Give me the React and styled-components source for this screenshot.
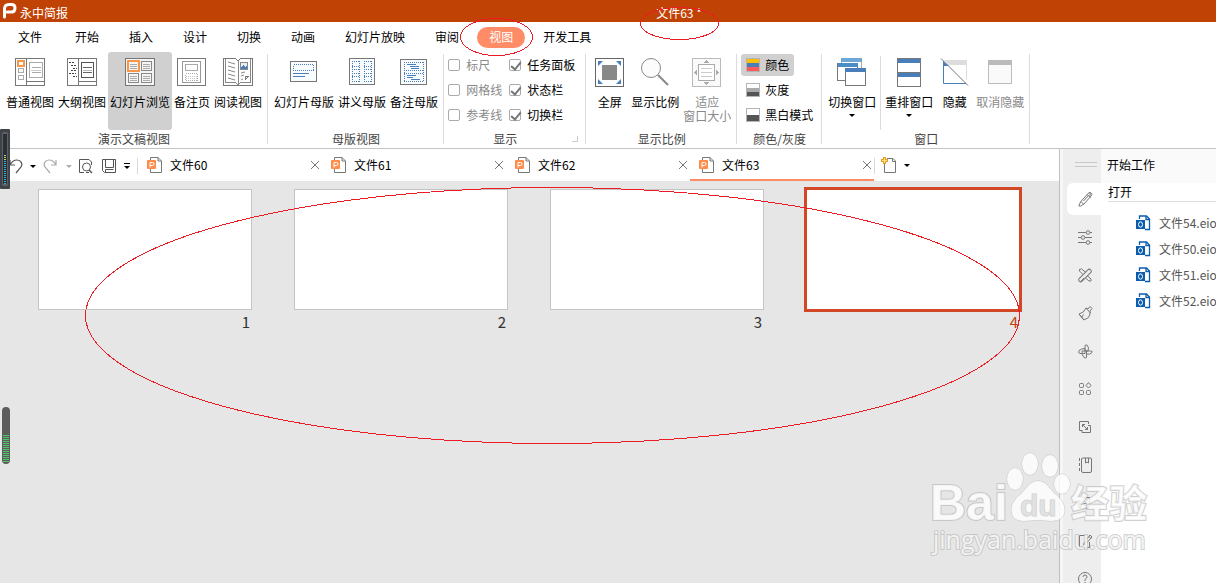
import React from "react";
import styled, { createGlobalStyle, css } from "styled-components";

const GlobalStyle = createGlobalStyle`
  * { box-sizing: border-box; }
  body { margin: 0; }
  body, button, input {
    font-family: "Noto Sans CJK SC", "Liberation Sans", sans-serif;
    font-size: 12px;
    line-height: 14px;
    color: #000;
  }
  button { border: 0; background: none; padding: 0; margin: 0; white-space: nowrap; cursor: pointer; }
  svg { display: block; flex: none; }
`;

const Window = styled.div`
  position: relative;
  height: 100vh;
  display: flex;
  flex-direction: column;
  overflow: hidden;
  background: #fff;
`;

/* ---------- title bar and menu ---------- */
const TitleBar = styled.header`
  display: grid;
  grid-template-columns: 1fr auto 1fr;
  align-items: center;
  height: 22px;
  flex: none;
  padding: 0 72px 0 2px;
  background: #c04205;
  color: #fff;
`;
const Brand = styled.div`
  display: flex;
  align-items: center;
  gap: 3px;
`;
const DocTitle = styled.h1`
  margin: 0 0 0 212px;
  font-size: 12px;
  font-weight: 400;
  line-height: 14px;
  padding-top: 4px;
`;
const AppName = styled.span`
  padding-top: 4px;
`;
const Menu = styled.nav`
  display: flex;
  align-items: center;
  height: 30px;
  flex: none;
`;
const MenuItem = styled.button`
  height: 21px;
  padding: 0 ${(p) => (p.$wide ? 18 : 15)}px;
`;
const ActiveMenuItem = styled(MenuItem)`
  margin: 0 3px;
  padding: 0 12px;
  border-radius: 11px;
  background: #ff8c66;
  color: #fff;
`;

/* ---------- ribbon ---------- */
const Ribbon = styled.div`
  display: flex;
  height: 97px;
  flex: none;
  border-bottom: 1px solid #c4c4c4;
`;
const Group = styled.section`
  position: relative;
  display: flex;
  flex-direction: column;
  padding: 0 ${(p) => (p.$options ? 8 : 4)}px 0 4px;
  &::after {
    content: "";
    position: absolute;
    right: 0;
    top: 2px;
    bottom: 4px;
    width: 1px;
    background: #dcdcdc;
  }
`;
const Tools = styled.div`
  display: flex;
  height: 78px;
`;
const GroupFooter = styled.div`
  display: flex;
  align-items: center;
  justify-content: center;
  gap: 10px;
  height: 14px;
  margin-top: 2px;
  color: #444;
`;
const GroupName = styled.h2`
  margin: 0;
  flex: 1;
  text-align: center;
  font-size: 12px;
  font-weight: 400;
  line-height: 14px;
`;
const Launcher = styled.button`
  width: 6px;
  height: 6px;
  border: solid #ccc;
  border-width: 0 1px 1px 0;
`;
const BigButton = styled.button`
  display: flex;
  flex-direction: column;
  align-items: center;
  min-width: 39px;
  height: 78px;
  padding: 6px 2px 0;
  gap: 7px;
  border-radius: 3px;
  ${(p) => p.$active && css`background: #d0d0d0;`}
  &:disabled { color: #8a8a8a; }
`;
const BigLabel = styled.span`
  display: flex;
  flex-direction: column;
  align-items: center;
`;
const Caret = styled.span`
  width: 0;
  height: 0;
  border: 3px solid transparent;
  border-top-color: ${(p) => (p.$muted ? "#a9b0b5" : "#000")};
  border-bottom-width: 0;
  ${(p) => p.$below && css`margin-top: 5px;`}
`;
const Divider = styled.span`
  width: 1px;
  margin: 4px 2px 0;
  background: #dcdcdc;
`;
const Stack = styled.div`
  display: flex;
  flex-direction: column;
  align-items: flex-start;
  gap: 3px;
  padding-top: 2px;
`;
const SmallButton = styled.button`
  display: flex;
  align-items: center;
  gap: 5px;
  height: 22px;
  padding: 0 5px;
  border-radius: 3px;
  ${(p) => p.$active && css`background: #d0d0d0;`}
`;
const CheckGrid = styled.div`
  display: grid;
  grid-template-columns: auto auto;
  grid-auto-rows: 22px;
  gap: 3px 7px;
  padding: 2px 3px 0 0;
`;
const CheckLabel = styled.label`
  display: flex;
  align-items: center;
  gap: 6px;
  color: ${(p) => (p.$muted ? "#8a8a8a" : "#000")};
`;
const CheckBox = styled.input`
  appearance: none;
  position: relative;
  width: 12px;
  height: 12px;
  margin: 0;
  border: 1px solid #aaa;
  border-radius: 2px;
  background: #fff;
  &:checked::after {
    content: "";
    position: absolute;
    left: 3px;
    top: 0;
    width: 4px;
    height: 8px;
    border: solid #777;
    border-width: 0 2px 2px 0;
    transform: rotate(40deg);
  }
`;

/* ---------- workspace ---------- */
const Body = styled.div`
  display: flex;
  flex: 1;
  min-height: 0;
`;
const Workspace = styled.main`
  display: flex;
  flex-direction: column;
  flex: 1;
  min-width: 0;
  border-right: 1px solid #c0c0c0;
  background: #e6e6e6;
`;
const TabBar = styled.div`
  display: flex;
  height: 32px;
  flex: none;
  background: #fff;
`;
const QuickBar = styled.div`
  display: flex;
  align-items: center;
  gap: 6px;
  padding: 2px 6px 0 7px;
`;
const QuickButton = styled.button`
  display: flex;
  align-items: center;
  justify-content: center;
  width: ${(p) => (p.$narrow ? 8 : 16)}px;
  height: 18px;
`;
const Tab = styled.div`
  display: flex;
  align-items: center;
  width: 184px;
  padding: 2px 2px 0 9px;
  border-bottom: 2px solid ${(p) => (p.$active ? "#ff8c66" : "transparent")};
`;
const TabName = styled.button`
  display: flex;
  align-items: center;
  gap: 8px;
  flex: 1;
`;
const CloseButton = styled.button`
  padding: 0;
`;
const BarLine = styled.span`
  width: 1px;
  height: 16px;
  margin-top: 9px;
  background: #d9d9d9;
`;
const NewTab = styled.div`
  display: flex;
  align-items: center;
  gap: 6px;
  padding-left: 6px;
`;
const Sorter = styled.div`
  display: flex;
  flex-wrap: wrap;
  gap: 20px 42px;
  padding: 8px 37px 0 38px;
`;
const SlideItem = styled.figure`
  margin: 0;
  width: 214px;
`;
const Thumb = styled.div`
  height: 121px;
  background: #fff;
  border: 1px solid ${(p) => (p.$selected ? "#d24726" : "#c4c4c4")};
  ${(p) => p.$selected && css`box-shadow: 0 0 0 2px #d24726;`}
`;
const SlideNumber = styled.figcaption`
  padding: 2px 2px 0 0;
  text-align: right;
  font-size: 15px;
  line-height: 20px;
  color: ${(p) => (p.$selected ? "#c04205" : "#333")};
`;

/* ---------- task pane ---------- */
const Rail = styled.aside`
  width: 41px;
  flex: none;
  display: flex;
  flex-direction: column;
  align-items: flex-end;
  border-left: 3px solid #f6f6f6;
  background: #eee;
`;
const Grip = styled.div`
  width: 22px;
  height: 5px;
  flex: none;
  margin: 13px 4px 16px 0;
  border: solid #c8c8c8;
  border-width: 1px 0;
`;
const RailButton = styled.button`
  display: flex;
  align-items: center;
  width: 34px;
  height: 32px;
  margin-bottom: 6px;
  padding-left: 11px;
  flex: none;
  border-radius: 6px 0 0 6px;
  background: ${(p) => (p.$active ? "#fff" : "transparent")};
`;
const Pane = styled.section`
  width: 115px;
  flex: none;
  overflow: hidden;
`;
const PaneTitle = styled.h2`
  margin: 0;
  height: 34px;
  padding: 9px 0 0 6px;
  background: #fafafa;
  font-size: 12px;
  font-weight: 400;
  line-height: 14px;
`;
const PaneSection = styled.h3`
  margin: 0 0 0 7px;
  padding: 2px 0;
  border-bottom: 1px solid #ddd;
  font-size: 12px;
  font-weight: 400;
  line-height: 14px;
`;
const FileList = styled.ul`
  margin: 0;
  padding: 8px 0 0 35px;
  list-style: none;
`;
const FileLink = styled.a`
  display: flex;
  align-items: center;
  gap: 8px;
  height: 26px;
  color: #555;
  text-decoration: none;
  white-space: nowrap;
`;

/* ---------- floating layers ---------- */
const Floating = styled.div`
  position: absolute;
  left: ${(p) => p.$left}px;
  top: ${(p) => p.$top}px;
  pointer-events: none;
`;

/* ---------- drawings ---------- */
const Big = ({ children }) => (
  <svg width="30" height="30" viewBox="0 0 30 30" fill="none" stroke="#777" shapeRendering="crispEdges">{children}</svg>
);
const lines = (x1, x2, ys, stroke = "#aaa") =>
  ys.map((y) => <path key={`${x1}-${y}`} d={`M${x1} ${y}.5H${x2}`} stroke={stroke} />);

const NormalIcon = () => (
  <Big>
    <rect x=".5" y=".5" width="29" height="27" fill="#fff" />
    <path d="M11.5 0V28M11 23.5H30" />
    <rect x="3" y="3" width="6" height="5" stroke="#f79646" strokeWidth="2" />
    <rect x="3.500" y="10.500" width="5" height="4" stroke="#aaa" />
    <rect x="3.500" y="17.500" width="5" height="4" stroke="#aaa" />
    <rect x="14.500" y="4.500" width="13" height="15" stroke="#aaa" />
    {lines(17, 26, [9, 14])}{lines(16, 26, [12], "#ccc")}
  </Big>
);
const OutlineIcon = () => (
  <Big>
    <rect x=".5" y=".5" width="29" height="27" fill="#fff" />
    <path d="M11.5 0V28M11 23.5H30" />
    <path d="M2 4.500H8M4 7.500H9M6 10.500H10M4 12.500H9M2 15.500H9M6 18.500H10" stroke="#444" strokeDasharray="2 1" />
    <rect x="14.500" y="4.500" width="12" height="15" stroke="#555" />
    {lines(16, 25, [9, 14], "#666")}{lines(16, 25, [12], "#bbb")}
  </Big>
);
const SorterIcon = () => (
  <Big>
    <rect x=".5" y=".5" width="29" height="27" fill="#f4f4f4" />
    {[[16, 3], [3, 15], [16, 15]].map(([x, y]) => (
      <rect key={`${x}-${y}`} x={x + 0.5} y={y + 0.5} width="10" height="9" stroke="#888" />
    ))}
    <rect x="3" y="3" width="11" height="10" stroke="#f79646" strokeWidth="2" />
    {lines(5, 12, [6, 8, 10, 18, 20, 22])}{lines(18, 25, [6, 8, 10, 18, 20, 22])}
  </Big>
);
const NotesIcon = () => (
  <Big>
    <rect x=".5" y=".5" width="28" height="27" fill="#fff" />
    <rect x="5.500" y="3.500" width="18" height="21" stroke="#999" />
    <rect x="8.500" y="6.500" width="12" height="6" stroke="#aaa" />
    <rect x="8.500" y="15.500" width="12" height="7" stroke="#aaa" strokeDasharray="1 1" />
    <path d="M9 18.500H20M9 20.500H20" stroke="#ccc" strokeDasharray="1 1" />
  </Big>
);
const ReadingIcon = () => (
  <Big>
    <path d="M0 .5H12L15 2.500L18 .5H30M.5 0V27.500H29.500V0" />
    <path d="M2.500 1V24.500H12L15 26.500L18 24.500H27.500V1M15.500 3V27" stroke="#888" />
    <path d="M5 4L12 6M5 8L12 10M5 12L12 14M5 16L12 18M5 20L12 22M18 15L22 14M18 18L21 17M18 22L20 21" stroke="#888" shapeRendering="auto" />
    <rect x="17.500" y="4.500" width="7" height="7" stroke="#888" fill="#e8eef5" />
    <path d="M18 11V9L20 7L22 9L24 8V11Z" fill="#4a7ebb" stroke="none" />
    <path d="M22 22L26 18H22Z" fill="#fff" />
  </Big>
);
const SlideMasterIcon = () => (
  <Big>
    <rect x="1.500" y="3.500" width="26" height="20" fill="#f9fcfe" />
    <rect x="4.500" y="6.500" width="20" height="6" stroke="#4a7ebb" strokeDasharray="1 1" />
    {lines(4, 20, [15], "#4a7ebb")}{lines(4, 16, [18], "#4a7ebb")}
  </Big>
);
const HandoutIcon = () => (
  <Big>
    <rect x="2.500" y=".5" width="25" height="26" fill="#f9fcfe" />
    <path d="M5 3.500H13M17 3.500H25M5 8.500H13M17 8.500H25M5 11.500H13M17 11.500H25M5 15.500H13M17 15.500H25M5 18.500H13M17 18.500H25M5 23.500H13M17 23.500H25M5.500 3V24M12.500 3V24M17.500 3V24M24.500 3V24" stroke="#4a7ebb" strokeDasharray="1 1" />
  </Big>
);
const NotesMasterIcon = () => (
  <Big>
    <rect x="1.500" y="1.500" width="26" height="25" fill="#f9fcfe" />
    <path d="M5 4.500H25M5 12.500H25M5 15.500H25M5 23.500H25M5.500 4V24M24.500 4V24" stroke="#4a7ebb" strokeDasharray="1 1" />
    <path d="M8 6.500H17M11 8.500H20M12 10.500H20M8 17.500H17M8 19.500H14M12 21.500H21" stroke="#4a7ebb" />
  </Big>
);
const FullScreenIcon = () => (
  <Big>
    <rect x=".5" y=".5" width="28" height="28" fill="#fff" stroke="#666" />
    <rect x="7" y="7" width="15" height="15" fill="#888" stroke="none" />
    <path d="M3 3H8L3 8ZM26 3H21L26 8ZM3 26H8L3 21ZM26 26H21L26 21Z" fill="#4a7ebb" stroke="none" shapeRendering="auto" />
  </Big>
);
const ZoomIcon = () => (
  <svg width="30" height="30" viewBox="0 0 30 30" fill="none" stroke="#888">
    <circle cx="11" cy="10" r="9.500" fill="#fcfcfc" />
    <path d="M18 17L28 27" strokeWidth="2" />
  </svg>
);
const FitIcon = () => (
  <Big>
    <rect x=".5" y=".5" width="28" height="28" fill="#fafafa" stroke="#bbb" />
    <rect x="6.500" y="6.500" width="16" height="16" stroke="#aaa" fill="#fff" />
    {lines(9, 20, [10, 14, 18], "#ccc")}
    <path d="M12 5L14.500 2L17 5ZM12 24L14.500 27L17 24ZM5 12L2 14.500L5 17ZM24 12L27 14.500L24 17Z" fill="#aaa" stroke="none" />
  </Big>
);
const SwitchWindowIcon = () => (
  <Big>
    <rect x="4.500" y=".5" width="20" height="14" fill="#fff" stroke="#aaa" />
    <path d="M4 0H25V4H4Z" fill="#6fa6d8" stroke="none" />
    <rect x=".5" y="5.500" width="20" height="17" fill="#fff" />
    <path d="M1 5H21V9H1Z" fill="#4a8ec5" stroke="none" />
    <rect x="8.500" y="10.500" width="20" height="17" fill="#fff" />
    <path d="M8 10H29V14H8Z" fill="#4a7ebb" stroke="none" />
  </Big>
);
const ArrangeIcon = () => (
  <Big>
    <rect x="3.500" y=".5" width="23" height="28" fill="#fff" />
    <path d="M4 0H26V5H4ZM4 14H26V19H4Z" fill="#4a7ebb" stroke="none" />
    <path d="M3 .5H27M3 14.500H27" />
  </Big>
);
const HideIcon = () => (
  <svg width="30" height="30" viewBox="0 0 30 30" fill="none">
    <path d="M4 2H27V7H9Z" fill="#ddd" />
    <path d="M26.500 5V22" stroke="#ddd" />
    <path d="M3.500 3V25.500H26" stroke="#4a7ebb" />
    <path d="M3 3L9 8H3Z" fill="#4a7ebb" />
    <path d="M1 .5L28 27.500" stroke="#777" />
  </svg>
);
const UnhideIcon = () => (
  <Big>
    <rect x="3.500" y="2.500" width="23" height="23" fill="#fafafa" stroke="#bbb" />
    <path d="M3 2H27V7H3Z" fill="#bbb" stroke="none" />
  </Big>
);
const Swatch = ({ colors }) => (
  <svg width="14" height="14" viewBox="0 0 14 14" shapeRendering="crispEdges">
    <rect x=".5" y=".5" width="13" height="13" fill="#fff" stroke="#b5b5b5" />
    {colors.map((c, i) => {
      const h = 12 / colors.length;
      return <rect key={i} x="1" y={1 + i * h} width="12" height={h} fill={c} />;
    })}
  </svg>
);
const Logo = () => (
  <svg width="15" height="18" viewBox="0 0 15 18" fill="none" stroke="#fff" strokeWidth="3">
    <path d="M2.500 15V7Q2.500 2.500 7 2.500H9.500Q13 2.500 13 6Q13 10 9.500 10H5" strokeLinecap="round" />
  </svg>
);
const Tiny = ({ children, stroke = "#555", w = 16 }) => (
  <svg width={w} height="16" viewBox={`0 0 ${w} 16`} fill="none" stroke={stroke}>{children}</svg>
);
const UndoIcon = () => <Tiny><path d="M3 2V7H8M3 7C5 3 7 2 10 2C14 2 16 6 14 9L9 15" strokeWidth="1.200" /></Tiny>;
const RedoIcon = () => <Tiny stroke="#aaa"><path d="M13 2V7H8M13 7C11 3 9 2 6 2C2 2 0 6 2 9L7 15" strokeWidth="1.200" /></Tiny>;
const PreviewIcon = () => (
  <Tiny><path d="M5 14.500H.5V1.500H10L12.500 4V7M10 14.500H7" /><circle cx="7.500" cy="9" r="4" /><path d="M10 12L13 15" strokeWidth="1.500" /></Tiny>
);
const SaveIcon = () => (
  <Tiny><path d="M1.500 1.500H14.500V14.500H3.500L1.500 12.500ZM4.500 1.500V9.500H12.500V1.500M4.500 14V11.500H12.500" /></Tiny>
);
const MoreIcon = () => (
  <svg width="8" height="8" viewBox="0 0 8 8"><path d="M1 1.500H7" stroke="#000" /><path d="M1 4H7L4 7Z" /></svg>
);
const DocIcon = () => (
  <Tiny w={15} stroke="#777">
    <path d="M3.500 .5H11L14.500 4V15.500H3.500ZM11 .5V4H14" fill="#fff" />
    <rect x="0" y="3" width="9" height="9" rx="1" fill="#ff8c4a" stroke="none" />
    <path d="M3 10.500V5.500H5.500Q7 5.500 7 7T5.500 8.500H3" stroke="#fff" />
  </Tiny>
);
const NewIcon = () => (
  <Tiny stroke="#777">
    <path d="M6 1.500H12L14.500 4V15.500H3.500V7M11.500 1.500V4.500H14.500" />
    <path d="M3.500 0V7M0 3.500H7" stroke="#e8a020" strokeWidth="3" /><path d="M3.500 1V6M1 3.500H6" stroke="#ffe28a" />
  </Tiny>
);
const CloseIcon = () => (
  <svg width="10" height="10" viewBox="0 0 10 10" stroke="#777"><path d="M1 1L9 9M9 1L1 9" /></svg>
);
const FileIcon = () => (
  <Tiny w={15} stroke="#0b5cad">
    <path d="M3.500 4V1H10.500L13.500 4V14.500H9M10 1V4.500H13.500" strokeWidth="1.300" />
    <rect x="0" y="5" width="9" height="9" fill="#0b5cad" stroke="none" />
    <ellipse cx="4.500" cy="9.500" rx="2" ry="2.700" stroke="#fff" />
  </Tiny>
);

const railIcons = [
  ["设计", <path d="M.8 15L2.500 11L10 2.500Q11.500 .8 13 2T13.500 4.500L6 13L2.500 15ZM9 3.500L12.500 6.500M3 10.500L5.500 13M5.500 10L10.500 4.500M12 1V5" />],
  ["属性", <><path d="M0 3.500H8M12 3.500H14M0 8.500H3M7 8.500H14M0 13.500H8M12 13.500H14" /><circle cx="10" cy="3.500" r="1.800" /><circle cx="5" cy="8.500" r="1.800" /><circle cx="10" cy="13.500" r="1.800" /></>],
  ["工具", <><rect x="-1" y="6.500" width="16" height="4" rx="2" transform="rotate(-45 7 8.500)" /><path d="M5 7.500L1.500 4Q.5 1.500 3.500 2L8 5.500M6 11L2.500 14.500M9 8.500L13 12Q14 15 11 14L7.500 11" /></>],
  ["样式", <path d="M1 9Q6 8 8 3L10 4L12 1.500L14 3.500L12 6V9Q12 13 6 15ZM8 3L12.500 8M4 12L5.500 9.500M1 9L6 15" />],
  ["切换", <path d="M7 8V3Q7 1.500 9 2Q11.500 4.500 10 8H7ZM7 8V5.500Q3.500 5.500 1 7.500Q0 10.500 2 10.500H7V8ZM7 8H4Q3.500 12 6 14.500Q8 16 8.500 14V8M8 8H12.500Q15 8 14 9.500Q12 12 8.500 11" />],
  ["组件", <><rect x="1.500" y="2.500" width="4" height="4" rx="1" /><rect x="1.500" y="9.500" width="4" height="4" rx="1" /><rect x="8.500" y="9.500" width="4" height="4" rx="1" /><path d="M10.500 1.500L13 4.500L10.500 7L8 4.500Z" /></>],
  ["缩放", <path d="M4 11.500H1.500V2.500H10.500V5M10 6.500H12.500V13.500H4V11M4.500 5.500L9.500 10.500M4.500 8V5.500H7M9.500 8V10.500H7" />],
  ["书签", <><path d="M3.500 2Q3.500 1 5 1H12Q13.500 1 13.500 2V14Q13.500 15.500 12 15.500H5Q3.500 15.500 3.500 14ZM7.500 1V6L9 5L10.500 6V1" /><path d="M1.500 1V16" strokeDasharray="3 2" /></>],
  ["大纲", <path d="M4 2.500H12L10.500 13.500H2.500L3 8M6 5.500H10M5.500 8.500H9M1 5V13H3" />],
  ["编辑", <path d="M8 2.500H1.500V14.500H11.500V9M6 10L5.500 11.500L7.500 11L14 4L12 2ZM11 3.500L13 5.500" />],
  ["帮助", <><circle cx="7" cy="8" r="6.500" /><path d="M5 6Q5 4 7 4T9 6Q9 7 7 8.500V10M7 11V12.500" /></>],
];

const docs = ["文件60", "文件61", "文件62", "文件63"];
const files = ["文件54.eio", "文件50.eio", "文件51.eio", "文件52.eio"];

const Tool = ({ icon, label, second, caret, ...rest }) => (
  <BigButton {...rest}>
    {icon}
    <BigLabel>
      <span>{label}</span>
      {second && <span>{second}</span>}
      {caret && <Caret $below />}
    </BigLabel>
  </BigButton>
);
const RibbonGroup = ({ name, options, children }) => (
  <Group $options={options}>
    <Tools>{children}</Tools>
    <GroupFooter>
      <GroupName>{name}</GroupName>
      {options && <Launcher aria-label="更多选项" />}
    </GroupFooter>
  </Group>
);
const Check = ({ label, on }) => (
  <CheckLabel $muted={!on}>
    <CheckBox type="checkbox" defaultChecked={on} />
    {label}
  </CheckLabel>
);

export default function App() {
  return (
    <Window>
      <GlobalStyle />
      <TitleBar>
        <Brand><Logo /><AppName>永中简报</AppName></Brand>
        <DocTitle>文件63 *</DocTitle>
      </TitleBar>
      <Menu>
        <MenuItem $wide>文件</MenuItem>
        {["开始", "插入", "设计", "切换", "动画", "幻灯片放映", "审阅"].map((m) => (
          <MenuItem key={m}>{m}</MenuItem>
        ))}
        <ActiveMenuItem>视图</ActiveMenuItem>
        <MenuItem>开发工具</MenuItem>
      </Menu>
      <Ribbon>
        <RibbonGroup name="演示文稿视图">
          <Tool icon={<NormalIcon />} label="普通视图" />
          <Tool icon={<OutlineIcon />} label="大纲视图" />
          <Tool icon={<SorterIcon />} label="幻灯片浏览" $active />
          <Tool icon={<NotesIcon />} label="备注页" />
          <Tool icon={<ReadingIcon />} label="阅读视图" />
        </RibbonGroup>
        <RibbonGroup name="母版视图">
          <Tool icon={<SlideMasterIcon />} label="幻灯片母版" />
          <Tool icon={<HandoutIcon />} label="讲义母版" />
          <Tool icon={<NotesMasterIcon />} label="备注母版" />
        </RibbonGroup>
        <RibbonGroup name="显示" options>
          <CheckGrid>
            <Check label="标尺" /><Check label="任务面板" on />
            <Check label="网格线" /><Check label="状态栏" on />
            <Check label="参考线" /><Check label="切换栏" on />
          </CheckGrid>
        </RibbonGroup>
        <RibbonGroup name="显示比例">
          <Tool icon={<FullScreenIcon />} label="全屏" />
          <Tool icon={<ZoomIcon />} label="显示比例" />
          <Tool icon={<FitIcon />} label="适应" second="窗口大小" disabled />
        </RibbonGroup>
        <RibbonGroup name="颜色/灰度">
          <Stack>
            <SmallButton $active><Swatch colors={["#ffc000", "#4a7ebb", "#ff5a5a"]} />颜色</SmallButton>
            <SmallButton><Swatch colors={["#fff", "#aaa", "#555"]} />灰度</SmallButton>
            <SmallButton><Swatch colors={["#fff", "#555"]} />黑白模式</SmallButton>
          </Stack>
        </RibbonGroup>
        <RibbonGroup name="窗口">
          <Tool icon={<SwitchWindowIcon />} label="切换窗口" caret />
          <Divider />
          <Tool icon={<ArrangeIcon />} label="重排窗口" caret />
          <Tool icon={<HideIcon />} label="隐藏" />
          <Tool icon={<UnhideIcon />} label="取消隐藏" disabled />
        </RibbonGroup>
      </Ribbon>
      <Body>
        <Workspace>
          <TabBar>
            <QuickBar>
              <QuickButton aria-label="撤销"><UndoIcon /></QuickButton>
              <QuickButton aria-label="撤销列表" $narrow><Caret /></QuickButton>
              <QuickButton aria-label="恢复"><RedoIcon /></QuickButton>
              <QuickButton aria-label="恢复列表" $narrow><Caret $muted /></QuickButton>
              <QuickButton aria-label="打印预览"><PreviewIcon /></QuickButton>
              <QuickButton aria-label="保存"><SaveIcon /></QuickButton>
              <QuickButton aria-label="更多" $narrow><MoreIcon /></QuickButton>
            </QuickBar>
            <BarLine />
            {docs.map((d) => (
              <Tab key={d} $active={d === "文件63"}>
                <TabName><DocIcon />{d}</TabName>
                <CloseButton aria-label={`关闭${d}`}><CloseIcon /></CloseButton>
              </Tab>
            ))}
            <BarLine />
            <NewTab>
              <QuickButton aria-label="新建"><NewIcon /></QuickButton>
              <QuickButton aria-label="新建列表" $narrow><Caret /></QuickButton>
            </NewTab>
          </TabBar>
          <Sorter>
            {[1, 2, 3, 4].map((n) => (
              <SlideItem key={n}>
                <Thumb $selected={n === 4} />
                <SlideNumber $selected={n === 4}>{n}</SlideNumber>
              </SlideItem>
            ))}
          </Sorter>
        </Workspace>
        <Rail>
          <Grip />
          {railIcons.map(([name, shape], i) => (
            <RailButton key={name} aria-label={name} $active={i === 0}>
              <Tiny stroke="#777">{shape}</Tiny>
            </RailButton>
          ))}
        </Rail>
        <Pane>
          <PaneTitle>开始工作</PaneTitle>
          <PaneSection>打开</PaneSection>
          <FileList>
            {files.map((f) => (
              <li key={f}><FileLink href="#"><FileIcon />{f}</FileLink></li>
            ))}
          </FileList>
        </Pane>
      </Body>

      <Floating $left={0} $top={129}>
        <svg width="10" height="60" viewBox="0 0 10 60">
          <rect width="10" height="60" rx="1" fill="#3f4348" />
          <rect x="2" y="3" width="6" height="54" rx="2" fill="#5c626a" />
          <rect x="3" y="5" width="4" height="50" fill="#2b2f34" />
          <path d="M5 26V32" stroke="#b6d66a" strokeWidth="2" strokeDasharray="1 1" />
          <path d="M5 32V55" stroke="#3ea9dc" strokeWidth="2" strokeDasharray="1 1" />
        </svg>
      </Floating>
      <Floating $left={2} $top={407}>
        <svg width="8" height="57" viewBox="0 0 8 57">
          <rect width="8" height="57" rx="4" fill="#5c5c5c" />
          <path d="M4 28V55" stroke="#4cc76a" strokeWidth="6" strokeDasharray="1 1" />
        </svg>
      </Floating>
      <Floating $left={924} $top={444}>
        <svg width="232" height="120" viewBox="0 0 232 120" fill="#fff" fillOpacity=".8" stroke="#bbb" strokeOpacity=".7" paintOrder="stroke">
          <text x="6" y="76" fontFamily="Liberation Sans" fontWeight="700" fontSize="50" strokeWidth="2">Bai</text>
          <ellipse cx="91" cy="35" rx="8" ry="11" />
          <ellipse cx="106" cy="20" rx="8" ry="11" />
          <ellipse cx="126" cy="22" rx="8" ry="11" />
          <ellipse cx="138" cy="40" rx="8" ry="10" />
          <path d="M114 37C122 37 125 44 131 50C139 56 142 63 140 70C137 79 126 77 114 76C101 77 91 79 88 70C86 63 89 56 97 50C103 44 106 37 114 37Z" />
          <text x="96" y="72" fontFamily="Liberation Sans" fontWeight="700" fontSize="30" fill="#dcdcdc">du</text>
          <text x="147" y="73" fontFamily="Noto Sans CJK SC" fontWeight="700" fontSize="38" strokeWidth="2">经验</text>
          <text x="9" y="105" fontFamily="Open Sans" fontWeight="400" fontSize="25" strokeWidth="2">jingyan.baidu.com</text>
        </svg>
      </Floating>
      <Floating $left={0} $top={0}>
        <svg width="1024" height="450" viewBox="0 0 1024 450" fill="none" stroke="#ed1c24" shapeRendering="crispEdges">
          <ellipse cx="552.500" cy="315.500" rx="467" ry="128" />
          <ellipse cx="496.500" cy="37" rx="36" ry="18.500" />
          <ellipse cx="679.500" cy="23.500" rx="39" ry="16" />
        </svg>
      </Floating>
    </Window>
  );
}
